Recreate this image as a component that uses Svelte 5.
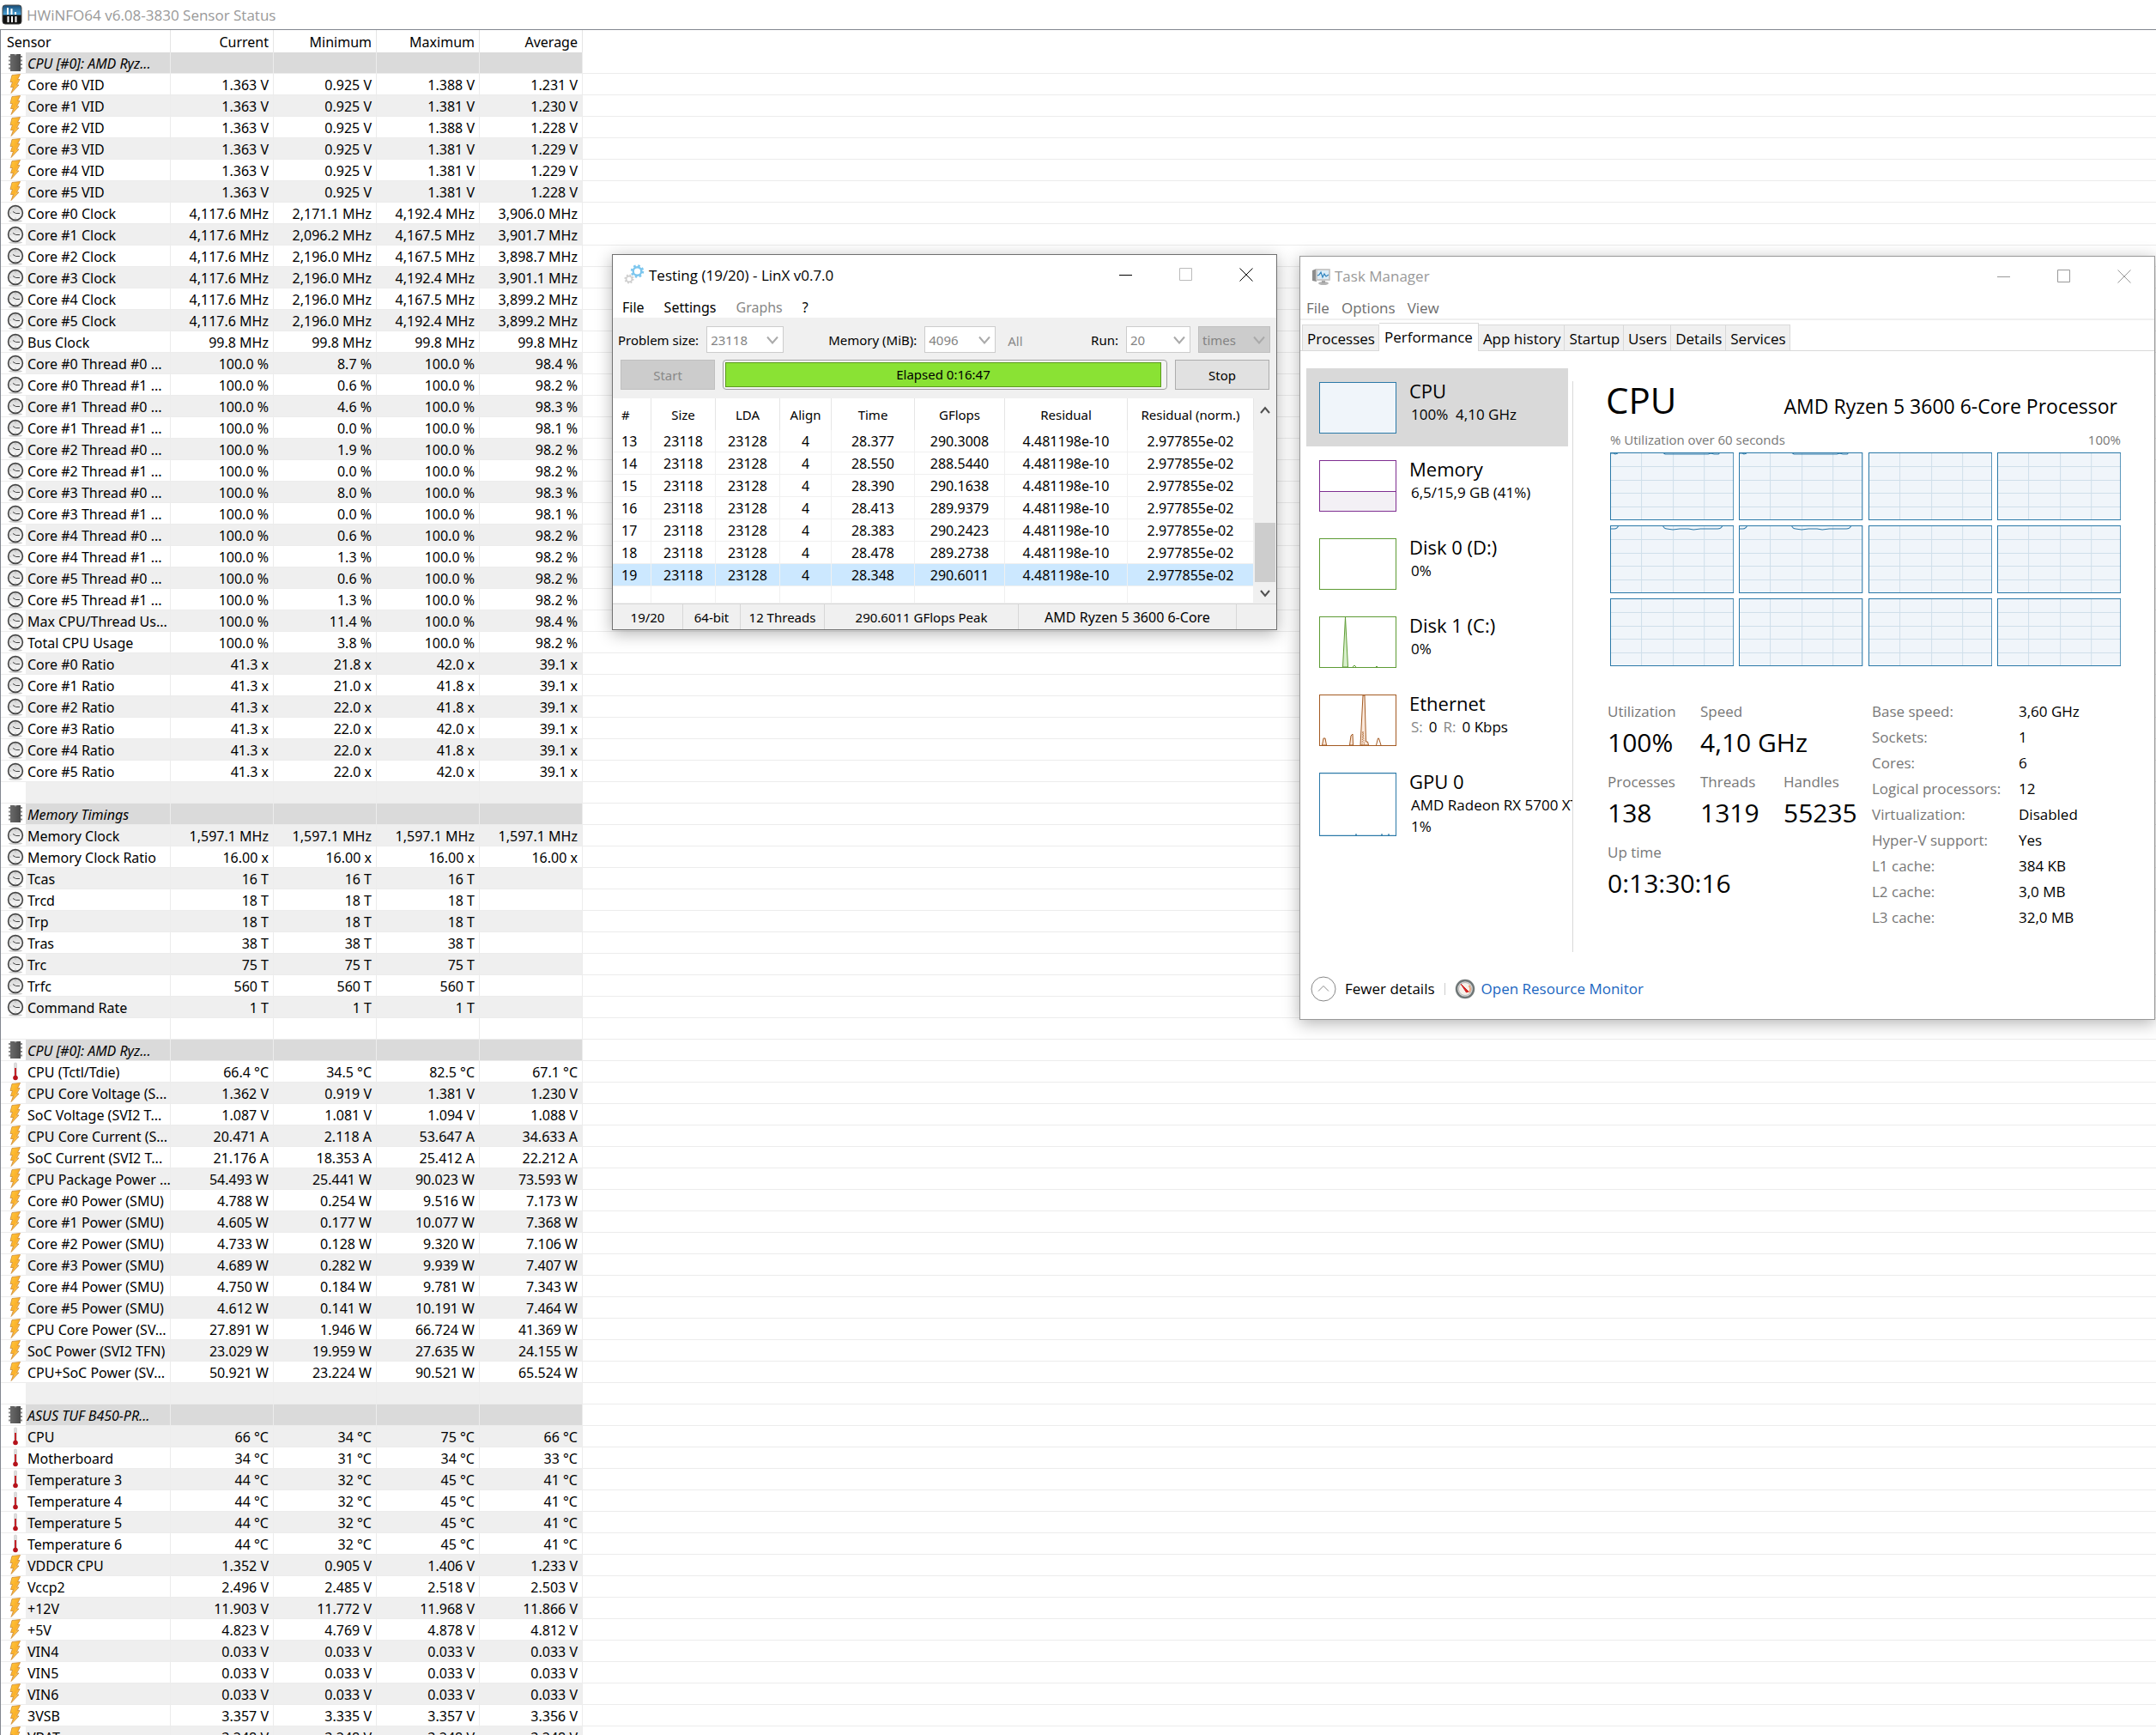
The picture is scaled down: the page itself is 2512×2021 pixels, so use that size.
<script>
    let activeTab = 'Performance';
    let activeResource = 'CPU';

    const rawSensors = `
section|CPU [#0]: AMD Ryz...
volt|Core #0 VID|1.363 V|0.925 V|1.388 V|1.231 V
volt|Core #1 VID|1.363 V|0.925 V|1.381 V|1.230 V
volt|Core #2 VID|1.363 V|0.925 V|1.388 V|1.228 V
volt|Core #3 VID|1.363 V|0.925 V|1.381 V|1.229 V
volt|Core #4 VID|1.363 V|0.925 V|1.381 V|1.229 V
volt|Core #5 VID|1.363 V|0.925 V|1.381 V|1.228 V
clock|Core #0 Clock|4,117.6 MHz|2,171.1 MHz|4,192.4 MHz|3,906.0 MHz
clock|Core #1 Clock|4,117.6 MHz|2,096.2 MHz|4,167.5 MHz|3,901.7 MHz
clock|Core #2 Clock|4,117.6 MHz|2,196.0 MHz|4,167.5 MHz|3,898.7 MHz
clock|Core #3 Clock|4,117.6 MHz|2,196.0 MHz|4,192.4 MHz|3,901.1 MHz
clock|Core #4 Clock|4,117.6 MHz|2,196.0 MHz|4,167.5 MHz|3,899.2 MHz
clock|Core #5 Clock|4,117.6 MHz|2,196.0 MHz|4,192.4 MHz|3,899.2 MHz
clock|Bus Clock|99.8 MHz|99.8 MHz|99.8 MHz|99.8 MHz
clock|Core #0 Thread #0 ...|100.0 %|8.7 %|100.0 %|98.4 %
clock|Core #0 Thread #1 ...|100.0 %|0.6 %|100.0 %|98.2 %
clock|Core #1 Thread #0 ...|100.0 %|4.6 %|100.0 %|98.3 %
clock|Core #1 Thread #1 ...|100.0 %|0.0 %|100.0 %|98.1 %
clock|Core #2 Thread #0 ...|100.0 %|1.9 %|100.0 %|98.2 %
clock|Core #2 Thread #1 ...|100.0 %|0.0 %|100.0 %|98.2 %
clock|Core #3 Thread #0 ...|100.0 %|8.0 %|100.0 %|98.3 %
clock|Core #3 Thread #1 ...|100.0 %|0.0 %|100.0 %|98.1 %
clock|Core #4 Thread #0 ...|100.0 %|0.6 %|100.0 %|98.2 %
clock|Core #4 Thread #1 ...|100.0 %|1.3 %|100.0 %|98.2 %
clock|Core #5 Thread #0 ...|100.0 %|0.6 %|100.0 %|98.2 %
clock|Core #5 Thread #1 ...|100.0 %|1.3 %|100.0 %|98.2 %
clock|Max CPU/Thread Us...|100.0 %|11.4 %|100.0 %|98.4 %
clock|Total CPU Usage|100.0 %|3.8 %|100.0 %|98.2 %
clock|Core #0 Ratio|41.3 x|21.8 x|42.0 x|39.1 x
clock|Core #1 Ratio|41.3 x|21.0 x|41.8 x|39.1 x
clock|Core #2 Ratio|41.3 x|22.0 x|41.8 x|39.1 x
clock|Core #3 Ratio|41.3 x|22.0 x|42.0 x|39.1 x
clock|Core #4 Ratio|41.3 x|22.0 x|41.8 x|39.1 x
clock|Core #5 Ratio|41.3 x|22.0 x|42.0 x|39.1 x
blank
section|Memory Timings
clock|Memory Clock|1,597.1 MHz|1,597.1 MHz|1,597.1 MHz|1,597.1 MHz
clock|Memory Clock Ratio|16.00 x|16.00 x|16.00 x|16.00 x
clock|Tcas|16 T|16 T|16 T|
clock|Trcd|18 T|18 T|18 T|
clock|Trp|18 T|18 T|18 T|
clock|Tras|38 T|38 T|38 T|
clock|Trc|75 T|75 T|75 T|
clock|Trfc|560 T|560 T|560 T|
clock|Command Rate|1 T|1 T|1 T|
blank
section|CPU [#0]: AMD Ryz...
temp|CPU (Tctl/Tdie)|66.4 °C|34.5 °C|82.5 °C|67.1 °C
volt|CPU Core Voltage (S...|1.362 V|0.919 V|1.381 V|1.230 V
volt|SoC Voltage (SVI2 T...|1.087 V|1.081 V|1.094 V|1.088 V
volt|CPU Core Current (S...|20.471 A|2.118 A|53.647 A|34.633 A
volt|SoC Current (SVI2 T...|21.176 A|18.353 A|25.412 A|22.212 A
volt|CPU Package Power ...|54.493 W|25.441 W|90.023 W|73.593 W
volt|Core #0 Power (SMU)|4.788 W|0.254 W|9.516 W|7.173 W
volt|Core #1 Power (SMU)|4.605 W|0.177 W|10.077 W|7.368 W
volt|Core #2 Power (SMU)|4.733 W|0.128 W|9.320 W|7.106 W
volt|Core #3 Power (SMU)|4.689 W|0.282 W|9.939 W|7.407 W
volt|Core #4 Power (SMU)|4.750 W|0.184 W|9.781 W|7.343 W
volt|Core #5 Power (SMU)|4.612 W|0.141 W|10.191 W|7.464 W
volt|CPU Core Power (SV...|27.891 W|1.946 W|66.724 W|41.369 W
volt|SoC Power (SVI2 TFN)|23.029 W|19.959 W|27.635 W|24.155 W
volt|CPU+SoC Power (SV...|50.921 W|23.224 W|90.521 W|65.524 W
blank
section|ASUS TUF B450-PR...
temp|CPU|66 °C|34 °C|75 °C|66 °C
temp|Motherboard|34 °C|31 °C|34 °C|33 °C
temp|Temperature 3|44 °C|32 °C|45 °C|41 °C
temp|Temperature 4|44 °C|32 °C|45 °C|41 °C
temp|Temperature 5|44 °C|32 °C|45 °C|41 °C
temp|Temperature 6|44 °C|32 °C|45 °C|41 °C
volt|VDDCR CPU|1.352 V|0.905 V|1.406 V|1.233 V
volt|Vccp2|2.496 V|2.485 V|2.518 V|2.503 V
volt|+12V|11.903 V|11.772 V|11.968 V|11.866 V
volt|+5V|4.823 V|4.769 V|4.878 V|4.812 V
volt|VIN4|0.033 V|0.033 V|0.033 V|0.033 V
volt|VIN5|0.033 V|0.033 V|0.033 V|0.033 V
volt|VIN6|0.033 V|0.033 V|0.033 V|0.033 V
volt|3VSB|3.357 V|3.335 V|3.357 V|3.356 V
volt|VBAT|3.248 V|3.248 V|3.248 V|3.248 V`;

    const sensors = rawSensors.trim().split('\n').map((line) => {
        const [kind, name = '', ...values] = line.split('|');
        while (values.length < 4) values.push('');
        return { kind, name, values };
    });

    const runs = [
        [13, '28.377', '290.3008'],
        [14, '28.550', '288.5440'],
        [15, '28.390', '290.1638'],
        [16, '28.413', '289.9379'],
        [17, '28.383', '290.2423'],
        [18, '28.478', '289.2738'],
        [19, '28.348', '290.6011']
    ];

    const tabs = ['Processes', 'Performance', 'App history', 'Startup', 'Users', 'Details', 'Services'];

    const resources = [
        { name: 'CPU', lines: ['100%  4,10 GHz'], graph: 'cpu' },
        { name: 'Memory', lines: ['6,5/15,9 GB (41%)'], graph: 'memory' },
        { name: 'Disk 0 (D:)', lines: ['0%'], graph: 'disk' },
        { name: 'Disk 1 (C:)', lines: ['0%'], graph: 'disk1' },
        { name: 'Ethernet', lines: [], graph: 'net' },
        { name: 'GPU 0', lines: ['AMD Radeon RX 5700 XT', '1%'], graph: 'gpu' }
    ];

    // small dips at the top of the busy threads
    const light = 'M0 1h4l2 1l3-1M61 0l3 2h50l3-1l4 1h5l2-2';
    const deep = 'M0 4h5q3 0 5-4M61 0q2 4 5 4l7 1l8-1h10l6 1l8-1h20q4 0 6-4';
    const threads = [light, light, '', '', deep, deep, '', '', '', '', '', ''];

    const details = [
        ['Base speed:', '3,60 GHz'],
        ['Sockets:', '1'],
        ['Cores:', '6'],
        ['Logical processors:', '12'],
        ['Virtualization:', 'Disabled'],
        ['Hyper-V support:', 'Yes'],
        ['L1 cache:', '384 KB'],
        ['L2 cache:', '3,0 MB'],
        ['L3 cache:', '32,0 MB']
    ];
</script>

{#snippet sensorIcon(kind)}
    <svg class="icon" viewBox="0 0 24 24" aria-hidden="true">
        {#if kind === 'volt'}
            <path d="M8 1.5L17.5 0.5L14.5 6.5H17L13.5 13H16L7 22.5L9.5 15.5H6.5L8.5 9.5H6Z" fill="url(#bolt)" stroke="#c98a3a" stroke-width="0.8" />
        {:else if kind === 'clock'}
            <ellipse cx="12" cy="21.5" rx="8" ry="1.5" fill="#ccc" />
            <circle cx="12" cy="12" r="8.4" fill="url(#dial)" stroke="#444" stroke-width="1.6" />
            <path d="M9 10.5L12.500 12.5H17" fill="none" stroke="#444" stroke-width="1" />
            <path d="M12 5.5v1M12 17.5v1M5.5 12h1" stroke="#999" stroke-width="1" />
        {:else if kind === 'section'}
            <path d="M4 5h16M4 9.5h16M4 14h16M4 18.5h16" stroke="#8a8a8a" stroke-width="2" />
            <rect x="6" y="2" width="12" height="20" fill="url(#chip)" />
            <path d="M10.5 2a1.5 1.5 0 0 0 3 0z" fill="#999" />
        {:else if kind === 'temp'}
            <rect x="10.5" y="2" width="3" height="17" rx="1" fill="#ddd" stroke="#c4c4c4" stroke-width="0.5" />
            <rect x="11" y="8" width="2" height="11" fill="#c4252b" />
            <circle cx="12" cy="19.5" r="2.8" fill="#b5121b" />
        {/if}
    </svg>
{/snippet}

{#snippet windowButtons(maxDisabled)}
    <div class="window-buttons">
        <button aria-label="Minimize">
            <svg viewBox="0 0 16 16"><path d="M0 8.5h15" /></svg>
        </button>
        <button aria-label="Maximize" disabled={maxDisabled}>
            <svg viewBox="0 0 16 16"><path d="M0.5 0.5h14v14h-14z" /></svg>
        </button>
        <button aria-label="Close">
            <svg viewBox="0 0 16 16"><path d="M0.5 0.5l15 15M15.5 0.5l-15 15" /></svg>
        </button>
    </div>
{/snippet}

{#snippet chevron()}
    <svg class="chevron" viewBox="0 0 14 10" aria-hidden="true"><path d="M1 1.5l6 7l6-7" /></svg>
{/snippet}

{#snippet miniGraph(kind)}
    <svg class="mini {kind}" viewBox="0 0 90 60" preserveAspectRatio="none" aria-hidden="true">
        {#if kind === 'memory'}
            <path class="area" d="M0 36.5h90v24h-90z" />
            <path d="M0 36.5h90" />
        {:else if kind === 'disk1'}
            <path class="area" d="M27.5 59L30.5 1L33.5 59z" />
            <path d="M39 59l2-2l2 2M66 58.5h2" />
        {:else if kind === 'net'}
            <path class="area" d="M3.5 59L5 51h2L8.5 59zM35.5 59L37 48l2-2L39.5 59zM48 59L51 1h2L54.5 55h2L57.5 59z" />
            <path d="M66.5 59l2-8h1l2.5 8" />
            <path class="dots" d="M50 59l1-16l1.500 16" />
        {:else if kind === 'gpu'}
            <path d="M42 58.5h2M72 58.5h2M80 58.5h2" />
        {/if}
        <rect class="frame" x="0.5" y="0.5" width="89" height="59" />
    </svg>
{/snippet}

<svg class="defs" aria-hidden="true">
    <defs>
        <linearGradient id="bolt" x1="0" y1="0" x2="1" y2="1">
            <stop offset="0" stop-color="#ffc93c" />
            <stop offset="0.5" stop-color="#fbb02a" />
            <stop offset="1" stop-color="#ffec9a" />
        </linearGradient>
        <linearGradient id="dial" x1="0" y1="0" x2="0" y2="1">
            <stop offset="0" stop-color="#d4d4d4" />
            <stop offset="1" stop-color="#fafafa" />
        </linearGradient>
        <linearGradient id="chip" x1="0" y1="0" x2="1" y2="0">
            <stop offset="0" stop-color="#6a6a6a" />
            <stop offset="1" stop-color="#4a4a4a" />
        </linearGradient>
        <linearGradient id="logo" x1="0" y1="0" x2="0" y2="1">
            <stop offset="0" stop-color="#174a75" />
            <stop offset="0.5" stop-color="#4aa3d8" />
            <stop offset="0.54" stop-color="#111" />
        </linearGradient>
    </defs>
</svg>

<main class="desktop">
    <section class="hwinfo">
        <header class="hw-title">
            <svg viewBox="0 0 24 24" aria-hidden="true">
                <rect x="1" y="1" width="22" height="22" rx="3" fill="url(#logo)" stroke="#4a4a4a" />
                <path d="M7 4v8M11.500 5v7M16 9v3" stroke="#fff" stroke-width="2" />
                <path d="M7.500 14v7M12 14v7M16.500 14v7" stroke="#fff" stroke-width="2" />
            </svg>
            <span>HWiNFO64 v6.08-3830 Sensor Status</span>
        </header>
        <table class="sensors">
            <colgroup>
                <col class="c-icon"><col class="c-name"><col class="c-val"><col class="c-val"><col class="c-val"><col class="c-val"><col>
            </colgroup>
            <thead>
                <tr>
                    <th colspan="2" class="first">Sensor</th>
                    <th>Current</th>
                    <th>Minimum</th>
                    <th>Maximum</th>
                    <th>Average</th>
                    <td></td>
                </tr>
            </thead>
            <tbody>
                {#each sensors as sensor}
                    <tr class={sensor.kind}>
                        <td class="icon-cell">{@render sensorIcon(sensor.kind)}</td>
                        <td class="name">{sensor.name}</td>
                        {#each sensor.values as value}
                            <td>{value}</td>
                        {/each}
                        <td class="rest"></td>
                    </tr>
                {/each}
            </tbody>
        </table>
    </section>

    <section class="window linx">
        <header class="titlebar">
            <svg class="app-icon" viewBox="0 0 24 24" aria-hidden="true">
                <circle cx="15.500" cy="8" r="6.500" fill="none" stroke="#7cc6ee" stroke-width="2.500" stroke-dasharray="2.500 2.600" />
                <circle cx="15.500" cy="8" r="4.800" fill="none" stroke="#7cc6ee" stroke-width="2.400" />
                <circle cx="6" cy="17" r="4.600" fill="none" stroke="#cfcfcf" stroke-width="2" stroke-dasharray="1.800 1.800" />
                <circle cx="6" cy="17" r="3.400" fill="none" stroke="#cfcfcf" stroke-width="1.800" />
            </svg>
            <span class="caption">Testing (19/20) - LinX v0.7.0</span>
            {@render windowButtons(true)}
        </header>
        <nav class="menu">
            <button>File</button>
            <button>Settings</button>
            <button disabled>Graphs</button>
            <button>?</button>
        </nav>
        <div class="panel">
            <div class="options">
                <label for="size">Problem size:</label>
                <div class="combo size">
                    <select id="size" disabled><option>23118</option></select>
                    {@render chevron()}
                </div>
                <label for="memory" class="mem-label">Memory (MiB):</label>
                <div class="combo mem">
                    <select id="memory" disabled><option>4096</option></select>
                    {@render chevron()}
                </div>
                <button class="all" disabled>All</button>
                <label for="count" class="push">Run:</label>
                <div class="combo count">
                    <select id="count" disabled><option>20</option></select>
                    {@render chevron()}
                </div>
                <div class="combo unit">
                    <select aria-label="Run unit" disabled><option>times</option></select>
                    {@render chevron()}
                </div>
            </div>
            <div class="actions">
                <button disabled>Start</button>
                <div class="progress" role="progressbar" aria-label="Elapsed" aria-valuenow="98">
                    <div class="fill">Elapsed 0:16:47</div>
                </div>
                <button>Stop</button>
            </div>
        </div>
        <div class="results">
            <table>
                <colgroup>
                    <col class="r-num"><col class="r-size"><col class="r-size"><col class="r-align"><col class="r-time"><col class="r-gflops"><col class="r-res"><col>
                </colgroup>
                <thead>
                    <tr>
                        <th>#</th>
                        <th>Size</th>
                        <th>LDA</th>
                        <th>Align</th>
                        <th>Time</th>
                        <th>GFlops</th>
                        <th>Residual</th>
                        <th>Residual (norm.)</th>
                    </tr>
                </thead>
                <tbody>
                    {#each runs as [num, time, gflops]}
                        <tr class:selected={num === 19}>
                            <td>{num}</td>
                            <td>23118</td>
                            <td>23128</td>
                            <td>4</td>
                            <td>{time}</td>
                            <td>{gflops}</td>
                            <td>4.481198e-10</td>
                            <td>2.977855e-02</td>
                        </tr>
                    {/each}
                    <tr class="spare">
                        {#each Array(8) as _}<td></td>{/each}
                    </tr>
                </tbody>
            </table>
            <div class="scrollbar">
                <svg viewBox="0 0 12 10"><path d="M1 8l5-6l5 6" /></svg>
                <div class="thumb"></div>
                <svg viewBox="0 0 12 10"><path d="M1 2l5 6l5-6" /></svg>
            </div>
        </div>
        <footer class="status">
            <span class="s1">19/20</span>
            <span class="s2">64-bit</span>
            <span class="s3">12 Threads</span>
            <span class="s4">290.6011 GFlops Peak</span>
            <span class="s5">AMD Ryzen 5 3600 6-Core</span>
            <span class="s6"></span>
        </footer>
    </section>

    <section class="window taskmgr">
        <header class="titlebar">
            <svg class="app-icon" viewBox="0 0 24 24" aria-hidden="true">
                <path d="M1 5l5-2v15l-5-1z" fill="#8d8d8d" />
                <rect x="5" y="3" width="17" height="14" rx="1" fill="#c9c9c9" />
                <rect x="7" y="5" width="13" height="10" fill="#dcecf7" />
                <path d="M7 11l2-1l2-3l2 6l2-4l2 3l3-2" fill="none" stroke="#2f83bd" stroke-width="1.200" />
                <ellipse cx="14" cy="20" rx="6" ry="2" fill="#b5b5b5" />
                <path d="M12 17h4v3h-4z" fill="#a5a5a5" />
            </svg>
            <span class="caption">Task Manager</span>
            {@render windowButtons(false)}
        </header>
        <nav class="menu">
            <button>File</button>
            <button>Options</button>
            <button>View</button>
        </nav>
        <div class="tabs" role="tablist">
            {#each tabs as tab}
                <button role="tab" aria-selected={tab === activeTab} class:active={tab === activeTab} on:click={() => (activeTab = tab)}>{tab}</button>
            {/each}
        </div>
        <div class="body">
            <aside>
                {#each resources as res}
                    <button class="resource" class:active={res.name === activeResource} on:click={() => (activeResource = res.name)}>
                        {@render miniGraph(res.graph)}
                        <span class="text">
                            <span class="res-name">{res.name}</span>
                            {#each res.lines as line}
                                <span class="res-line">{line}</span>
                            {/each}
                            {#if res.name === 'Ethernet'}
                                <span class="res-line net-line"><i>S:</i><span>0</span><i>R:</i><span>0 Kbps</span></span>
                            {/if}
                        </span>
                    </button>
                {/each}
            </aside>
            <div class="details">
                <div class="heading">
                    <h1>CPU</h1>
                    <h2>AMD Ryzen 5 3600 6-Core Processor</h2>
                </div>
                <div class="scale">
                    <span>% Utilization over 60 seconds</span>
                    <span>100%</span>
                </div>
                <div class="graphs">
                    {#each threads as dip}
                        <svg viewBox="0 0 144 79" preserveAspectRatio="none">
                            <path class="grid" d="M36.500 0v79M73.500 0v79M109.500 0v79M0 16.500h144M0 32.500h144M0 47.500h144M0 63.500h144" />
                            <path class="line" d={dip} />
                            <rect x="0.5" y="0.5" width="143" height="78" />
                        </svg>
                    {/each}
                </div>
                <div class="stats">
                    <dl class="big">
                        <div><dt>Utilization</dt><dd>100%</dd></div>
                        <div class="wide"><dt>Speed</dt><dd>4,10 GHz</dd></div>
                        <div><dt>Processes</dt><dd>138</dd></div>
                        <div><dt>Threads</dt><dd>1319</dd></div>
                        <div><dt>Handles</dt><dd>55235</dd></div>
                        <div class="wide"><dt>Up time</dt><dd>0:13:30:16</dd></div>
                    </dl>
                    <dl class="small">
                        {#each details as [label, value]}
                            <dt>{label}</dt>
                            <dd>{value}</dd>
                        {/each}
                    </dl>
                </div>
            </div>
        </div>
        <footer class="tm-footer">
            <button class="fewer">
                <svg viewBox="0 0 30 30" aria-hidden="true"><circle cx="15" cy="15" r="14" /><path d="M9 17.500l6-6l6 6" /></svg>
                Fewer details
            </button>
            <span class="divider"></span>
            <a href="#resmon">
                <svg viewBox="0 0 24 24" aria-hidden="true">
                    <circle cx="12" cy="12" r="10" fill="#ddd" stroke="#6f7777" stroke-width="2.500" />
                    <circle cx="12" cy="12" r="7.500" fill="#f6f1ea" stroke="#bbb" />
                    <path d="M16.500 8a6 6 0 0 1 0 8" fill="none" stroke="#e8a27a" stroke-width="2" />
                    <path d="M7 6l9 9l-2.500 1z" fill="#d22" stroke="#c22" />
                </svg>
                Open Resource Monitor
            </a>
        </footer>
    </section>
</main>

<style>
    :global(body) {
        background: #fff;
    }

    .defs {
        position: absolute;
        width: 0;
        height: 0;
    }

    .desktop {
        position: relative;
        height: 100vh;
        overflow: hidden;
        color: #000;
        font-family: "Segoe UI", "Open Sans", "Noto Sans", sans-serif;
        font-size: 17px;
    }

    button,
    select {
        font: inherit;
        color: inherit;
        padding: 0;
        margin: 0;
        border: none;
        background: none;
    }

    table {
        border-collapse: separate;
        border-spacing: 0;
        table-layout: fixed;
        width: 100%;
    }

    th {
        font-weight: normal;
    }

    /* sensor list */
    .hw-title {
        display: flex;
        align-items: center;
        gap: 5px;
        height: 34px;
        padding-left: 2px;
        color: #999;
    }

    .hw-title svg {
        width: 24px;
        height: 24px;
    }

    .sensors {
        border-top: 1px solid #828790;
        border-left: 1px solid #828790;
        font-family: Tahoma, "Noto Sans", sans-serif;
        font-size: 16px;
        line-height: 22px;
    }

    .c-icon {
        width: 29px;
    }

    .c-name {
        width: 169px;
    }

    .c-val {
        width: 120px;
    }

    .sensors th {
        height: 24px;
        padding: 2px 5px 0 0;
        border-right: 1px solid #e5e5e5;
        text-align: right;
    }

    .sensors th.first {
        padding-left: 7px;
        text-align: left;
    }

    .sensors td {
        padding: 2px 5px 0 0;
        border-right: 1px solid #ececec;
        border-bottom: 1px solid #ececec;
        text-align: right;
        white-space: nowrap;
    }

    .sensors thead td {
        border: none;
    }

    .sensors tbody td {
        height: 22px;
    }

    .sensors tbody tr:nth-child(odd) td {
        background: #efefef;
    }

    .sensors tbody tr.section td {
        background: #dadada;
        font-style: italic;
    }

    .sensors tbody td.name {
        padding: 2px 0 0 2px;
        text-align: left;
    }

    .sensors tbody tr td.icon-cell,
    .sensors tbody tr td.rest {
        background: #fff;
        border-right: none;
    }

    .sensors tbody td.icon-cell {
        height: 24px;
        padding: 0 0 0 5px;
    }

    .icon {
        display: block;
        width: 24px;
        height: 24px;
    }

    /* windows */
    .window {
        position: absolute;
        display: flex;
        flex-direction: column;
        box-sizing: border-box;
        background: #fff;
        border: 1px solid #707070;
        box-shadow: 0 4px 18px rgba(0, 0, 0, 0.3);
    }

    .titlebar {
        display: flex;
        align-items: center;
        gap: 5px;
        height: 46px;
        padding-left: 13px;
    }

    .app-icon {
        width: 24px;
        height: 24px;
    }

    .caption {
        flex: 1;
    }

    .window-buttons {
        display: flex;
    }

    .window-buttons button {
        display: flex;
        align-items: center;
        justify-content: center;
        width: 70px;
        height: 30px;
    }

    .window-buttons svg {
        width: 16px;
        height: 16px;
        fill: none;
        stroke: #000;
    }

    .window-buttons button:disabled svg {
        stroke: #bbb;
    }

    .menu {
        display: flex;
        gap: 20px;
    }

    /* LinX */
    .linx {
        left: 713px;
        top: 296px;
        width: 775px;
        height: 438px;
        font-family: Tahoma, "Noto Sans", sans-serif;
        font-size: 15px;
    }

    .linx .caption {
        font-family: "Segoe UI", "Open Sans", "Noto Sans", sans-serif;
        font-size: 17px;
    }

    .linx .menu {
        gap: 23px;
        height: 25px;
        padding: 2px 0 0 11px;
        font-size: 16px;
    }

    .linx button:disabled {
        color: #888;
    }

    .panel {
        display: flex;
        flex-direction: column;
        gap: 8px;
        padding: 10px 7px 10px 6px;
        background: #f0f0f0;
    }

    .options {
        display: flex;
        align-items: center;
    }

    .combo {
        position: relative;
        margin-left: 9px;
    }

    .combo select {
        appearance: none;
        box-sizing: border-box;
        width: 100%;
        height: 31px;
        padding-left: 4px;
        border: 1px solid #ccc;
        background: #fff;
        color: #838383;
        opacity: 1;
        display: block;
    }

    .combo .chevron {
        position: absolute;
        right: 6px;
        top: 11px;
        width: 14px;
        height: 10px;
        fill: none;
        stroke: #aaa;
        stroke-width: 2;
    }

    .combo.size {
        width: 90px;
    }

    .combo.mem {
        width: 83px;
    }

    .combo.count {
        width: 75px;
    }

    .combo.unit {
        width: 84px;
    }

    .combo.unit select {
        background: #ccc;
        border-color: #bfbfbf;
    }

    .mem-label {
        margin-left: 52px;
    }

    .push {
        margin-left: auto;
    }

    .all {
        margin-left: 14px;
        padding-top: 3px;
    }

    .actions {
        display: flex;
        gap: 9px;
        padding: 0 1px 0 3px;
    }

    .actions button {
        width: 110px;
        height: 35px;
        border: 1px solid #adadad;
        background: #e1e1e1;
    }

    .actions button:disabled {
        border-color: #bfbfbf;
        background: #ccc;
    }

    .progress {
        flex: 1;
        box-sizing: border-box;
        height: 35px;
        padding: 2px 6px 2px 2px;
        border: 1px solid #a0a0a0;
        border-radius: 4px;
        background: #f4f4f4;
    }

    .fill {
        box-sizing: border-box;
        height: 29px;
        line-height: 27px;
        border: 1px solid #5c9a1e;
        background: #8ae234;
        text-align: center;
    }

    .results {
        display: flex;
        flex: 1;
        min-height: 0;
    }

    .results table {
        flex: 1;
        line-height: 24px;
        text-align: center;
    }

    .results th {
        height: 37px;
        border-right: 1px solid #e5e5e5;
    }

    .results td {
        height: 25px;
        border-right: 1px solid #f0f0f0;
        border-bottom: 1px solid #f0f0f0;
        font-size: 16px;
    }

    .results .spare td {
        height: 19px;
    }

    .results th,
    .results td {
        padding: 0;
    }

    .results th:first-child,
    .results td:first-child {
        padding-left: 10px;
        text-align: left;
    }

    .selected td {
        background: #cce8ff;
    }

    .r-num {
        width: 45px;
    }

    .r-size {
        width: 75px;
    }

    .r-align {
        width: 60px;
    }

    .r-time {
        width: 97px;
    }

    .r-gflops {
        width: 105px;
    }

    .r-res {
        width: 143px;
    }

    .scrollbar {
        display: flex;
        flex-direction: column;
        align-items: center;
        width: 26px;
        padding: 9px 0 7px;
        background: #f0f0f0;
    }

    .scrollbar svg {
        width: 12px;
        height: 10px;
        fill: none;
        stroke: #505050;
        stroke-width: 2;
    }

    .thumb {
        width: 24px;
        height: 69px;
        margin-top: auto;
        margin-bottom: 8px;
        background: #cdcdcd;
    }

    .status {
        display: flex;
        height: 29px;
        border-top: 1px solid #d7d7d7;
        background: #f0f0f0;
        line-height: 30px;
    }

    .status span {
        border-right: 1px solid #d7d7d7;
        box-sizing: border-box;
        text-align: center;
    }

    .s1 {
        width: 82px;
    }

    .s2 {
        width: 67px;
    }

    .s3 {
        width: 98px;
    }

    .s4 {
        width: 226px;
    }

    .s5 {
        flex: 1;
    }

    .status .s5 {
        font-size: 16px;
    }

    .status .s6 {
        width: 46px;
        border-right: none;
    }

    /* task manager */
    .taskmgr {
        left: 1514px;
        top: 298px;
        width: 997px;
        height: 890px;
        border-color: #999;
    }

    .taskmgr .titlebar,
    .taskmgr .menu {
        color: #999;
    }

    .taskmgr .titlebar {
        gap: 3px;
        height: 45px;
    }

    .taskmgr .window-buttons svg {
        stroke: #999;
    }

    .taskmgr .menu {
        gap: 14px;
        height: 26px;
        padding: 1px 0 0 7px;
        border-bottom: 2px solid #f0f0f0;
        color: #6d6d6d;
    }

    .tabs {
        display: flex;
        align-items: flex-end;
        height: 33px;
        padding: 3px 0 0 2px;
        margin-bottom: 20px;
        box-shadow: inset 0 -1px #d9d9d9;
    }

    .tabs button {
        height: 31px;
        padding: 2px 4px 0 5px;
        border: 1px solid #d9d9d9;
        border-left: none;
        background: #f0f0f0;
    }

    .tabs button:first-child {
        border-left: 1px solid #d9d9d9;
    }

    .tabs button.active {
        height: 33px;
        padding: 0 6px 2px;
        border-bottom: none;
        background: #fff;
    }

    .body {
        display: flex;
        flex: 1;
        min-height: 0;
    }

    aside {
        flex: none;
        width: 310px;
        padding-left: 7px;
        overflow: hidden;
    }

    .resource {
        display: flex;
        align-items: flex-start;
        gap: 15px;
        width: 305px;
        height: 91px;
        padding: 16px 0 0 15px;
        text-align: left;
        white-space: pre;
    }

    .resource.active {
        background: #d9d9d9;
    }

    .text {
        display: flex;
        flex-direction: column;
    }

    .res-name {
        padding-bottom: 5px;
        font-size: 22px;
        line-height: 20px;
    }

    .res-line {
        padding-left: 2px;
        font-size: 17px;
        line-height: 25px;
    }

    .net-line {
        display: flex;
        gap: 7px;
    }

    .res-line i {
        color: #888;
        font-style: normal;
    }

    .mini {
        flex: none;
        width: 90px;
        height: 60px;
        fill: none;
        stroke: #2b79a8;
    }

    .mini.cpu .frame {
        fill: #f0f5fa;
    }

    .mini.memory {
        stroke: #7f2e91;
    }

    .mini.disk,
    .mini.disk1 {
        stroke: #5d9b34;
    }

    .mini.net {
        stroke: #a35a22;
    }

    .mini.gpu {
        height: 74px;
    }

    .mini .area {
        fill: #f3f0f5;
    }

    .mini.disk1 .area {
        fill: #d9f0cc;
    }

    .mini.net .area {
        fill: #fbe9dc;
    }

    .dots {
        stroke-dasharray: 1 1;
    }

    .details {
        flex: 1;
        margin: 15px 39px 7px 0;
        padding-left: 38px;
        border-left: 1px solid #d9d9d9;
    }

    .heading {
        display: flex;
        align-items: baseline;
        justify-content: space-between;
        height: 57px;
        padding-right: 4px;
    }

    h1,
    h2 {
        margin: 0;
        font-weight: normal;
    }

    h1 {
        font-size: 42px;
        line-height: 44px;
    }

    h2 {
        font-size: 23px;
    }

    .scale {
        display: flex;
        justify-content: space-between;
        padding-left: 5px;
        color: #777;
        font-size: 15px;
        line-height: 22px;
    }

    .graphs {
        display: grid;
        grid-template-columns: repeat(4, 1fr);
        gap: 6px;
        padding: 4px 0 0 5px;
    }

    .graphs svg {
        display: block;
        width: 100%;
        height: 79px;
        fill: none;
        background: #f0f5fa;
        stroke: #2b79a8;
    }

    .graphs .grid {
        stroke: #cfdfea;
    }

    .stats {
        display: flex;
        margin-top: 40px;
        padding-left: 2px;
    }

    dl,
    dd {
        margin: 0;
    }

    dt {
        color: #777;
    }

    .big {
        display: grid;
        grid-template-columns: 108px 97px 103px;
        align-content: start;
    }

    .big div {
        height: 82px;
    }

    .big .wide {
        grid-column-end: span 2;
    }

    .big dt {
        line-height: 26px;
    }

    .big dd {
        font-size: 30px;
        line-height: 46px;
    }

    .small {
        display: grid;
        grid-template-columns: 171px auto;
        grid-auto-rows: 30px;
        line-height: 26px;
    }

    .tm-footer {
        display: flex;
        align-items: center;
        height: 71px;
        padding-left: 12px;
    }

    .tm-footer button,
    .tm-footer a {
        display: flex;
        align-items: center;
    }

    .fewer {
        gap: 10px;
    }

    .fewer svg {
        width: 30px;
        height: 30px;
        fill: none;
        stroke: #888;
    }

    .divider {
        width: 1px;
        height: 14px;
        margin: 0 11px;
        background: #ccc;
    }

    .tm-footer a {
        gap: 7px;
        color: #1a66bf;
        text-decoration: none;
    }

    .tm-footer a svg {
        width: 24px;
        height: 24px;
    }
</style>
